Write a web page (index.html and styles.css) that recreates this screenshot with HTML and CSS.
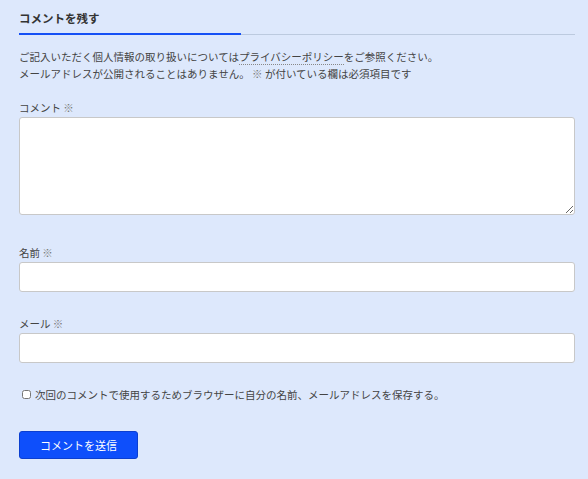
FILE: index.html
```html
<!DOCTYPE html>
<html lang="ja">
<head>
	<meta charset="UTF-8">
	<title>コメントを残す</title>
	<link rel="stylesheet" href="styles.css">
</head>
<body>
	<div class="comment-respond">
		<h3 class="comment-title"><span>コメントを残す</span></h3>
		<form class="comment-form" action="" method="post">
			<p class="comment-notes">
				ご記入いただく個人情報の取り扱いについては<a href="" class="policy-link">プライバシーポリシー</a>をご参照ください。<br>
				メールアドレスが公開されることはありません。 <span class="required">※</span> が付いている欄は必須項目です
			</p>
			<div class="field field-comment">
				<label for="comment">コメント <span class="required">※</span></label>
				<textarea id="comment" name="comment"></textarea>
			</div>
			<div class="field field-author">
				<label for="author">名前 <span class="required">※</span></label>
				<input id="author" name="author" type="text">
			</div>
			<div class="field field-email">
				<label for="email">メール <span class="required">※</span></label>
				<input id="email" name="email" type="email">
			</div>
			<p class="cookies-consent">
				<input id="cookies" name="cookies" type="checkbox">
				<label for="cookies">次回のコメントで使用するためブラウザーに自分の名前、メールアドレスを保存する。</label>
			</p>
			<p class="form-submit">
				<button type="submit" class="submit">コメントを送信</button>
			</p>
		</form>
	</div>
</body>
</html>
```

FILE: styles.css
```css
* {
	margin: 0;
	padding: 0;
	box-sizing: border-box;
}
body {
	background-color: #dde8fc;
	color: #444;
	font-family: "Noto Sans CJK JP", "Noto Sans", sans-serif;
	font-size: 10.5px;
	line-height: 17px;
}

.comment-respond {
	margin: 0 13px 0 19px;
	padding-top: 9px;
}

.comment-title {
	font-size: 11.5px;
	line-height: 18px;
	color: #333;
	border-bottom: 1px solid #bccadf;
	padding-bottom: 7px;
	position: relative;
}
.comment-title span::after {
	content: "";
	position: absolute;
	left: 0;
	bottom: -1px;
	width: 222px;
	height: 2px;
	background-color: #1550f5;
}

.comment-notes {
	margin-top: 13px;
}
.policy-link {
	color: inherit;
	text-decoration: none;
	border-bottom: 1px dotted #888;
}

.field label {
	display: block;
	line-height: 17px;
	margin-bottom: 1px;
}
.field-comment {
	margin-top: 17px;
}
.field-author {
	margin-top: 29px;
}
.field-email {
	margin-top: 23px;
}
.required {
	color: #777;
}
.field textarea,
.field input {
	display: block;
	width: 100%;
	background-color: #fff;
	border: 1px solid #c8c8c8;
	border-radius: 3px;
	font: inherit;
}
.field textarea {
	height: 98px;
	resize: vertical;
}
.field input {
	height: 30px;
}

.cookies-consent {
	margin-top: 23px;
	display: flex;
	align-items: center;
	padding-left: 3px;
}
.cookies-consent input {
	width: 9px;
	height: 9px;
	margin-right: 4px;
}

.form-submit {
	margin-top: 28px;
}
.submit {
	width: 119px;
	height: 28px;
	background-color: #0e4ffb;
	border: 1px solid #0b3fd0;
	border-radius: 3px;
	color: #fff;
	font-family: inherit;
	font-size: 11px;
	cursor: pointer;
}
```
